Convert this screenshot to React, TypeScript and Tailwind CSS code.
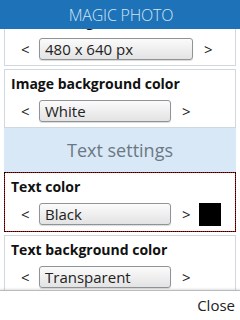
import React from "react";

const FONT = { fontFamily: '"Open Sans", "Liberation Sans", sans-serif' };

function Select({ value, width }: { value: string; width: string }) {
  return (
    <div
      className={`${width} h-[22px] shrink-0 rounded-[3px] border border-[#8f9498] bg-gradient-to-b from-[#fbfbfb] to-[#e3e3e3] pl-[5px] text-[15px] leading-[20px] text-[#222] shadow-[0_1px_1px_rgba(0,0,0,0.15)]`}
    >
      {value}
    </div>
  );
}

function Card({
  label,
  value,
  width,
  swatch,
  active,
  className = "",
}: {
  label: string;
  value: string;
  width: string;
  swatch?: string;
  active?: boolean;
  className?: string;
}) {
  return (
    <div
      className={`border bg-white px-[6px] pt-[4px] pb-[5px] ${
        active
          ? "border-[#e00000] outline outline-1 outline-dotted outline-[#000] -outline-offset-1"
          : "border-[#cfd8de]"
      } ${className}`}
    >
      <div className="h-[20px] text-[14px] font-bold leading-[20px] text-[#111]">{label}</div>
      <div className="mt-[6px] flex items-start pl-[10px]">
        <span className="w-[18px] text-[15px] leading-[22px] text-[#222]">&lt;</span>
        <Select value={value} width={width} />
        <span className="ml-[11px] w-[17px] text-[15px] leading-[22px] text-[#222]">&gt;</span>
        {swatch && <div className="h-[23px] w-[22px] bg-black" />}
      </div>
    </div>
  );
}

export default function App() {
  return (
    <div className="flex h-[320px] w-[240px] flex-col overflow-hidden bg-white" style={FONT}>
      <div className="relative z-10 flex h-[29px] shrink-0 items-center justify-center bg-[#1d72b8] pl-[2px] text-[16px] font-light tracking-[-0.2px] text-[#d3e5f5]">
        MAGIC PHOTO
      </div>

      <div className="flex-1 overflow-hidden px-[4px]">
        <Card className="-mt-[22px]" label="Size of image" value="480 x 640 px" width="w-[154px]" />
        <Card className="mt-[3px]" label="Image background color" value="White" width="w-[132px]" />
        <div className="flex h-[44px] items-center justify-center bg-[#d8e8f6] text-[18px] leading-[24px] text-[#6b7883]">
          Text settings
        </div>
        <Card active label="Text color" value="Black" width="w-[132px]" swatch="#000" />
        <Card className="mt-[3px]" label="Text background color" value="Transparent" width="w-[132px]" />
      </div>

      <div className="flex h-[30px] shrink-0 items-center justify-end border-t border-[#b9bcbf] bg-white pr-[5px] text-[15px] text-[#222] shadow-[0_-1px_2px_rgba(0,0,0,0.12)]">
        Close
      </div>
    </div>
  );
}
